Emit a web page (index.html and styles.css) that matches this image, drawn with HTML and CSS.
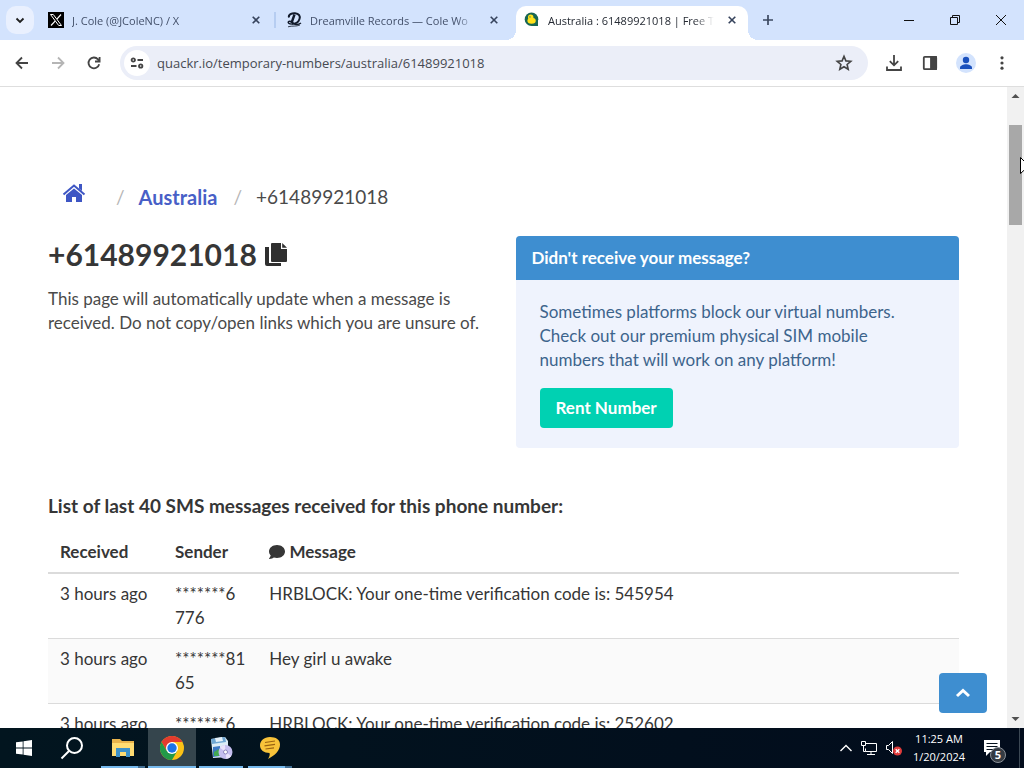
FILE: index.html
```html
<!DOCTYPE html>
<html lang="en">

<head>
    <meta charset="UTF-8">
    <meta name="viewport" content="width=device-width, initial-scale=1.0">
    <title>Australia : 61489921018 | Free Temporary Numbers</title>
    <link rel="stylesheet" href="styles.css">
</head>

<body>
    <!-- Browser tabs -->
    <header class="tab-strip">
        <button class="tab-search" aria-label="Search tabs">
            <svg width="10" height="10" viewBox="0 0 10 10"><path d="M1.5 3.5 5 7l3.5-3.5" fill="none" stroke="#1f1f1f" stroke-width="1.8"/></svg>
        </button>
        <div class="tab">
            <svg class="favicon" width="16" height="16" viewBox="0 0 16 16">
                <rect width="16" height="16" fill="#000"/>
                <path d="M2.500 2.500h2.800l8.200 11h-2.800z" fill="none" stroke="#fff"/>
                <path d="M13 2.500 8.900 7.100M7.100 9.100 3 13.500" stroke="#fff" stroke-width="1.200"/>
            </svg>
            <span class="tab-title">J. Cole (@JColeNC) / X</span>
            <button class="tab-close" aria-label="Close tab"><svg width="8" height="8" viewBox="0 0 8 8"><path d="M.7.7l6.600 6.600M7.300.7.7 7.300"/></svg></button>
        </div>
        <span class="tab-divider"></span>
        <div class="tab">
            <svg class="favicon" width="16" height="16" viewBox="0 0 16 16" fill="none" stroke="#111a2b">
                <path d="M8.500 2.500 5.500 11" stroke-width="2.400"/>
                <path d="M3 5.500C2 2.500 6 1 9 1.200c4 .2 5.500 2.800 4.500 5.800-1 3.200-4.500 5-8 5" stroke-width="2"/>
                <path d="M5.500 12c-2 0-4-1-3-2.300s3.500.2 5 1.500 4.500 2 7.500-.2" stroke-width="1.500"/>
                <path d="M2 14.800c4.500-1.300 8 0 12-1.800" stroke-width=".8"/>
            </svg>
            <span class="tab-title">Dreamville Records — Cole Wo</span>
            <button class="tab-close" aria-label="Close tab"><svg width="8" height="8" viewBox="0 0 8 8"><path d="M.7.7l6.600 6.600M7.300.7.7 7.300"/></svg></button>
        </div>
        <div class="tab active">
            <svg class="favicon" width="16" height="16" viewBox="0 0 16 16">
                <circle cx="7.500" cy="7.300" r="6.800" fill="#176653"/>
                <path d="M8 9h6v5H8z" fill="#176653"/>
                <circle cx="6.700" cy="5.200" r="2.700" fill="#ffe11a"/>
                <ellipse cx="7.600" cy="8.800" rx="4.200" ry="3" fill="#ffe11a"/>
                <circle cx="6" cy="4.900" r=".6" fill="#176653"/>
            </svg>
            <span class="tab-title">Australia : 61489921018 | Free T</span>
            <button class="tab-close" aria-label="Close tab"><svg width="8" height="8" viewBox="0 0 8 8"><path d="M.7.7l6.600 6.600M7.300.7.7 7.300"/></svg></button>
        </div>
        <button class="new-tab" aria-label="New tab">
            <svg width="12" height="12" viewBox="0 0 12 12"><path d="M6 1v10M1 6h10" stroke="#3c4960" stroke-width="1.700"/></svg>
        </button>
        <div class="window-controls">
            <button aria-label="Minimize"><svg width="10" height="10" viewBox="0 0 10 10"><path d="M0 5.500h10"/></svg></button>
            <button aria-label="Restore"><svg width="10" height="10" viewBox="0 0 10 10"><path d="M.5 2.500h7v7h-7zM2.500 2.500v-2h7v7h-2"/></svg></button>
            <button aria-label="Close"><svg width="10" height="10" viewBox="0 0 10 10"><path d="M0 0l10 10M10 0 0 10"/></svg></button>
        </div>
    </header>

    <!-- Address bar -->
    <div class="toolbar">
        <div class="nav-buttons">
            <button aria-label="Back"><svg width="16" height="16" viewBox="0 0 16 16"><path d="M14 8H3M8 2.500 2.500 8 8 13.500"/></svg></button>
            <button aria-label="Forward" disabled><svg width="16" height="16" viewBox="0 0 16 16"><path d="M2 8h11M8 2.500 13.500 8 8 13.500"/></svg></button>
            <button aria-label="Reload"><svg width="16" height="16" viewBox="0 0 16 16"><path d="M13.200 9.200A5.400 5.400 0 1 1 12 4.300l1.500 1.700M13.600 2v4.500H9"/></svg></button>
        </div>
        <div class="omnibox">
            <button class="site-info" aria-label="Site information">
                <svg width="14" height="14" viewBox="0 0 14 14"><circle cx="3.300" cy="4" r="1.700"/><path d="M7.500 4H13M1 10h5.500"/><circle cx="10.700" cy="10" r="1.700"/></svg>
            </button>
            <input class="url" type="text" aria-label="Address" value="quackr.io/temporary-numbers/australia/61489921018">
            <button class="bookmark" aria-label="Bookmark this tab">
                <svg width="18" height="18" viewBox="0 0 18 18"><path d="M9 2.300l1.900 4.600 4.900.4-3.700 3.200 1.100 4.800L9 12.700l-4.200 2.600 1.100-4.800-3.700-3.200 4.900-.4z"/></svg>
            </button>
        </div>
        <div class="toolbar-actions">
            <button aria-label="Downloads"><svg width="18" height="18" viewBox="0 0 18 18"><path d="M9 1v10M4.800 7.200 9 11.300l4.200-4.100M2 12.500V16h14v-3.500"/></svg></button>
            <button aria-label="Side panel"><svg width="16" height="16" viewBox="0 0 16 16"><rect x="1.800" y="1.800" width="12.400" height="12.400" rx="1"/><path d="M9 2h5v12H9z" fill="#444"/></svg></button>
            <button class="profile" aria-label="Profile"><svg width="20" height="20" viewBox="0 0 20 20"><circle cx="10" cy="10" r="10" fill="#d3e3fd"/><circle cx="10" cy="7" r="3.200" fill="#1a50bd"/><path d="M4 16v-1.500c0-2 3.500-3.300 6-3.300s6 1.300 6 3.300V16z" fill="#1a50bd"/></svg></button>
            <button aria-label="Menu"><svg width="16" height="16" viewBox="0 0 16 16"><g fill="#444" stroke="none"><circle cx="8" cy="2.800" r="1.600"/><circle cx="8" cy="8" r="1.600"/><circle cx="8" cy="13.200" r="1.600"/></g></svg></button>
        </div>
    </div>

    <!-- Web page -->
    <div class="viewport">
        <main class="page">
            <nav class="breadcrumb" aria-label="Breadcrumb">
                <ul>
                    <li><a class="home" href="#" aria-label="Home">
                        <svg width="24" height="20" viewBox="0 0 24 20"><path d="M12 5.500 20 12v7h-6v-5h-4v5H4v-7z" fill="#3e56c4"/><path d="M1.500 11.500 12 2.500l10.500 9" fill="none" stroke="#3e56c4" stroke-width="2"/><path d="M17 1h3v7l-3-2.500z" fill="#3e56c4"/></svg>
                    </a></li>
                    <li><a href="#">Australia</a></li>
                    <li>+61489921018</li>
                </ul>
            </nav>

            <div class="columns">
                <section class="number-info">
                    <h1>+61489921018
                        <button class="copy" aria-label="Copy number">
                            <svg width="22" height="26" viewBox="0 0 22 26"><path d="M0 6h4v16h12v3H2a2 2 0 0 1-2-2z" fill="#2f2f2f"/><path d="M6 3a1 1 0 0 1 1-1h9v6h6v12a1 1 0 0 1-1 1H7a1 1 0 0 1-1-1z" fill="#2f2f2f"/><path d="M17.200 2 22 6.800h-4.800z" fill="#2f2f2f"/></svg>
                        </button>
                    </h1>
                    <p>This page will automatically update when a message is received. Do not copy/open links which you are unsure of.</p>
                </section>
                <article class="message">
                    <div class="message-header">Didn't receive your message?</div>
                    <div class="message-body">
                        <p>Sometimes platforms block our virtual numbers. Check out our premium physical SIM mobile numbers that will work on any platform!</p>
                        <a class="rent-button" href="#">Rent Number</a>
                    </div>
                </article>
            </div>

            <h2>List of last 40 SMS messages received for this phone number:</h2>
            <table class="messages">
                <thead>
                    <tr>
                        <th class="received">Received</th>
                        <th class="sender">Sender</th>
                        <th><svg width="16" height="16" viewBox="0 0 16 16"><path d="M8 1C3.500 1 0 3.900 0 7.500c0 1.500.7 2.900 1.700 4C1.300 13 .2 14.200.1 14.300c-.2.300 0 .7.300.7 2 0 3.600-.9 4.400-1.500 1 .3 2.100.5 3.200.5 4.500 0 8-2.900 8-6.500S12.500 1 8 1z" fill="#363636"/></svg> Message</th>
                    </tr>
                </thead>
                <tbody>
                    <tr>
                        <td>3 hours ago</td>
                        <td>*******6<br>776</td>
                        <td>HRBLOCK: Your one-time verification code is: 545954</td>
                    </tr>
                    <tr>
                        <td>3 hours ago</td>
                        <td>*******81<br>65</td>
                        <td>Hey girl u awake</td>
                    </tr>
                    <tr>
                        <td>3 hours ago</td>
                        <td>*******6<br>776</td>
                        <td>HRBLOCK: Your one-time verification code is: 252602</td>
                    </tr>
                </tbody>
            </table>
        </main>

        <div class="scrollbar">
            <svg width="17" height="17" viewBox="0 0 17 17"><path d="M4.500 11 8.500 7l4 4z" fill="#505050"/></svg>
            <div class="scroll-track"><div class="scroll-thumb"></div></div>
            <svg width="17" height="17" viewBox="0 0 17 17"><path d="M4.500 6 8.500 10l4-4z" fill="#505050"/></svg>
        </div>

        <button class="back-to-top" aria-label="Back to top">
            <svg width="16" height="16" viewBox="0 0 16 16"><path d="M2 11l6-5.500 6 5.500" fill="none" stroke="#fff" stroke-width="3"/></svg>
        </button>
        <svg class="cursor" width="4" height="18" viewBox="0 0 4 18"><path d="M.5.5v16L4 13.300V4z" fill="#fff"/><path d="M4 4 .5.5v16L4 13.300" fill="none" stroke="#000"/></svg>
    </div>

    <!-- Taskbar -->
    <footer class="taskbar">
        <button class="task" aria-label="Start">
            <svg width="16" height="16" viewBox="0 0 16 16"><path d="M0 2.300 6.700 1.400v6.200H0zM7.500 1.300 16 0v7.600H7.500zM0 8.400h6.700v6.200L0 13.700zM7.500 8.400H16V16l-8.500-1.300z" fill="#fff"/></svg>
        </button>
        <button class="task" aria-label="Search">
            <svg width="24" height="24" viewBox="0 0 24 24" fill="none" stroke="#fff" stroke-width="2"><circle cx="14.500" cy="9.500" r="7.500"/><path d="M9 15l-7.500 7.500"/></svg>
        </button>
        <div class="running">
            <button class="task open stacked" aria-label="File Explorer">
                <svg width="22" height="20" viewBox="0 0 22 20"><path d="M0 1h8l2 2h12v15H0z" fill="#e9b44c"/><path d="M0 5h22v13H0z" fill="#ffdc72"/><path d="M4 10h14v9h-4v-5H8v5H4z" fill="#3d91c9"/></svg>
            </button>
            <button class="task open current" aria-label="Google Chrome">
                <svg width="24" height="24" viewBox="0 0 24 24">
                    <circle cx="12" cy="12" r="12" fill="#fbc116"/>
                    <path d="M1.600 6A12 12 0 0 1 22.400 6H12l-5.200 9z" fill="#e33b2e"/>
                    <path d="M1.600 6A12 12 0 0 0 12 24l5.200-9H6.800z" fill="#229a48"/>
                    <circle cx="12" cy="12" r="6" fill="#fff"/><circle cx="12" cy="12" r="4.700" fill="#1a73e8"/>
                </svg>
            </button>
            <button class="task open" aria-label="Programs">
                <svg width="24" height="24" viewBox="0 0 24 24">
                    <path d="M2 3l14-2 3 4v16L4 22z" fill="#dcecf6"/><path d="M2 3l14-2 1 5L3 8z" fill="#6fa7d3"/><path d="M6 2l7-1 1 4-7 1z" fill="#e7f3fb"/>
                    <path d="M4 11l7-1v10l-7 1z" fill="#3c79c4"/><path d="M5 16l5-3v7H5z" fill="#43a852"/>
                    <circle cx="16.500" cy="16" r="7" fill="#c5bff0"/><path d="M16.500 16 11 11.700a7 7 0 0 1 5-2.700zM16.500 16l5.800 4a7 7 0 0 1-5 3z" fill="#e9e3fb"/><circle cx="16.500" cy="16" r="2" fill="#fff" stroke="#8d87bd"/>
                </svg>
            </button>
            <button class="task open stacked" aria-label="Messenger">
                <svg width="22" height="24" viewBox="0 0 22 24"><path d="M11 1c6 0 10 2.700 10 7.500 0 6-5 11-12 14.500 1.500-2.500 2-4 1.500-6C5 17 1 14 1 9.500S5 1 11 1z" fill="#f8c33a"/><path d="M6 6.500l10-1.500M5.500 9.800l10.500-1.500M6.500 13l8.500-1.200" stroke="#9a6312" stroke-width="1.200"/></svg>
            </button>
        </div>
        <div class="tray">
            <svg width="14" height="16" viewBox="0 0 14 16"><path d="M1.500 11 7 5.500 12.500 11" stroke-width="1.400"/></svg>
            <svg width="16" height="16" viewBox="0 0 16 16"><path d="M4.500 3.500h11v8h-11v-3M10 11.500v3M6 14.500h8M.5 1.500h4v4h-4zM2.500 5.500v6h2"/></svg>
            <svg width="18" height="16" viewBox="0 0 18 16"><path d="M1.500 5.500h2l4-4v12l-4-4h-2z"/><circle cx="12.500" cy="11" r="4.500" fill="#e03b3b" stroke="none"/><path d="M10.700 9.200l3.600 3.600M14.300 9.200l-3.600 3.600" stroke-width="1.300"/></svg>
            <time class="clock" datetime="2024-01-20T11:25">11:25 AM<br>1/20/2024</time>
            <button class="notifications" aria-label="5 notifications">
                <svg width="18" height="18" viewBox="0 0 18 18"><path d="M1 1h16v12H7l-4 4v-4H1z" fill="#fff" stroke="none"/><path d="M3.500 4.500h11M3.500 7.500h11M3.500 10.500h8" stroke="#06121f"/></svg>
                <span class="badge">5</span>
            </button>
        </div>
    </footer>
</body>

</html>
```
FILE: styles.css
```css
* {
    margin: 0;
    padding: 0;
    box-sizing: border-box;
}

body {
    display: flex;
    flex-direction: column;
    height: 100vh;
    overflow: hidden;
    font-family: "Open Sans", sans-serif;
    background-color: #fff;
}

button {
    display: flex;
    align-items: center;
    justify-content: center;
    flex-shrink: 0;
    border: none;
    background: none;
    font-family: inherit;
}

svg {
    flex-shrink: 0;
}

/* Tab strip */
.tab-strip {
    display: flex;
    align-items: flex-end;
    height: 40px;
    flex-shrink: 0;
    padding-left: 6px;
    background-color: #d3e3fd;
}

.tab-search {
    width: 28px;
    height: 28px;
    margin-bottom: 6px;
    border-radius: 10px;
    background-color: #e9f0fe;
}

.tab {
    display: flex;
    align-items: center;
    width: 232px;
    height: 34px;
    padding: 0 6px 6px 8px;
    font-size: 11px;
    color: #43506a;
}

.tab-search + .tab {
    margin-left: 6px;
}

.tab-title {
    flex: 1;
    margin-left: 8px;
    overflow: hidden;
    white-space: nowrap;
    mask-image: linear-gradient(to right, #000 88%, transparent);
}

.tab-close {
    width: 20px;
    height: 20px;
    margin-left: 8px;
    stroke: #36435c;
    stroke-width: 1.6px;
}

.tab-divider {
    width: 2px;
    height: 16px;
    margin: 0 2px 12px;
    background-color: #b6cdf1;
}

.tab.active {
    position: relative;
    margin-left: 6px;
    color: #252a33;
    background-color: #fff;
    border-radius: 10px 10px 0 0;
}

/* Curved feet of the active tab */
.tab.active::before,
.tab.active::after {
    content: "";
    position: absolute;
    bottom: 0;
    width: 10px;
    height: 10px;
}

.tab.active::before {
    left: -10px;
    background: radial-gradient(circle at 0 0, transparent 10px, #fff 10px);
}

.tab.active::after {
    right: -10px;
    background: radial-gradient(circle at 100% 0, transparent 10px, #fff 10px);
}

.new-tab {
    width: 28px;
    height: 28px;
    margin: 0 0 6px 6px;
}

.window-controls {
    display: flex;
    margin-left: auto;
}

.window-controls button {
    width: 46px;
    height: 40px;
    fill: none;
    stroke: #111;
}

/* Toolbar */
.toolbar {
    display: flex;
    align-items: center;
    height: 47px;
    flex-shrink: 0;
    padding: 0 8px;
    border-bottom: 1px solid #dedede;
    fill: none;
    stroke: #444;
    stroke-width: 1.8px;
}

.nav-buttons {
    display: flex;
    gap: 8px;
}

.nav-buttons button {
    width: 28px;
    height: 28px;
}

.nav-buttons button:disabled {
    stroke: #b5b5b5;
}

.omnibox {
    display: flex;
    align-items: center;
    flex: 1;
    height: 34px;
    margin-left: 12px;
    padding: 0 10px 0 4px;
    border-radius: 17px;
    background-color: #ebeef8;
}

.site-info {
    width: 26px;
    height: 26px;
    border-radius: 50%;
    background-color: #fff;
}

.url {
    flex: 1;
    min-width: 0;
    margin-left: 7px;
    border: none;
    outline: none;
    background: none;
    font-family: inherit;
    font-size: 13px;
    color: #474a52;
}

.bookmark {
    width: 28px;
    height: 28px;
    stroke-width: 1.6px;
}

.toolbar-actions {
    display: flex;
    gap: 8px;
    margin-left: 12px;
}

.toolbar-actions button {
    width: 28px;
    height: 28px;
}

.toolbar-actions .profile {
    stroke: none;
}

/* Page area */
.viewport {
    position: relative;
    display: flex;
    flex: 1;
    min-height: 0;
    overflow: hidden;
}

.page {
    flex: 1;
    min-width: 0;
    padding: 94px 48px 0;
    font-family: Lato, sans-serif;
    font-size: 17px;
    line-height: 24px;
    color: #4a4a4a;
}

.breadcrumb ul {
    display: flex;
    list-style: none;
    font-size: 19px;
    line-height: 32px;
}

.breadcrumb li {
    display: flex;
}

.breadcrumb li + li::before {
    content: "/";
    margin: 0 14px 0 16px;
    color: #b5b5b5;
}

.breadcrumb a {
    font-size: 20px;
    font-weight: bold;
    color: #485fc7;
    text-decoration: none;
}

.breadcrumb .home {
    display: flex;
    align-items: flex-start;
    padding: 2px 14px 0;
}

.columns {
    display: grid;
    grid-template-columns: 1fr 1fr;
    gap: 24px;
    margin-top: 23px;
}

h1 {
    display: flex;
    align-items: center;
    gap: 8px;
    margin-bottom: 15px;
    font-size: 30px;
    line-height: 36px;
    color: #363636;
}

.message {
    border-radius: 4px;
    background-color: #eff3fd;
    overflow: hidden;
}

.message-header {
    padding: 10px 16px;
    font-weight: bold;
    color: #fff;
    background-color: #3e8ed0;
}

.message-body {
    padding: 20px 24px;
    color: #3d648c;
}

.rent-button {
    display: inline-block;
    margin-top: 16px;
    padding: 8px 16px;
    border-radius: 4px;
    font-weight: bold;
    color: #fff;
    background-color: #00d1b2;
    text-decoration: none;
    vertical-align: top;
}

h2 {
    margin: 46px 0 14px;
    font-size: 19px;
    line-height: 24px;
    color: #363636;
}

.messages {
    width: 100%;
    border-collapse: separate;
    border-spacing: 0;
    color: #363636;
}

.messages th,
.messages td {
    padding: 8px 12px;
    border-bottom: 1px solid #dbdbdb;
    text-align: left;
    vertical-align: top;
}

.messages th {
    border-bottom-width: 2px;
}

.messages th svg {
    vertical-align: -2px;
}

.messages .received {
    width: 115px;
}

.messages .sender {
    width: 94px;
}

.messages tbody tr:nth-child(even) {
    background-color: #fafafa;
}

/* Scroll bar */
.scrollbar {
    display: flex;
    flex-direction: column;
    width: 17px;
    background-color: #f1f1f1;
}

.scroll-track {
    flex: 1;
    padding: 21px 2px 0;
}

.scroll-thumb {
    height: 100px;
    background-color: #a8a8a8;
}

.back-to-top {
    position: absolute;
    right: 37px;
    bottom: 15px;
    width: 48px;
    height: 40px;
    border-radius: 4px;
    background-color: #3e8ed0;
}

.cursor {
    position: absolute;
    top: 70px;
    right: 0;
}

/* Taskbar */
.taskbar {
    display: flex;
    height: 40px;
    flex-shrink: 0;
    background: linear-gradient(to right, #02151f, #020c1c);
}

.running {
    display: flex;
    gap: 1px;
    margin-left: 3px;
}

.task {
    width: 48px;
    height: 40px;
    border-bottom: 2px solid transparent;
    border-top: 2px solid transparent;
}

.task.open {
    border-image: linear-gradient(to right, transparent 4px, #76b9ed 4px 44px, transparent 44px) 2;
    border-top: none;
    padding-top: 2px;
}

.task.stacked {
    border-image: linear-gradient(to right, transparent 4px, #76b9ed 4px 38px, #426f94 38px 44px, transparent 44px) 2;
}

.task.current {
    background-color: #35454d;
    border-image: none;
    border-bottom-color: #76b9ed;
}

.tray {
    display: flex;
    align-items: center;
    gap: 8px;
    margin-left: auto;
    padding-right: 4px;
    border-right: 1px solid #3c4854;
    margin-right: 4px;
    fill: none;
    stroke: #fff;
    color: #fff;
}

.clock {
    width: 56px;
    font-size: 11px;
    line-height: 18px;
    text-align: center;
    white-space: nowrap;
    stroke: none;
}

.notifications {
    position: relative;
    width: 40px;
    height: 40px;
    padding-right: 6px;
}

.badge {
    position: absolute;
    right: 9px;
    bottom: 5px;
    width: 16px;
    height: 16px;
    border: 1px solid #8b9199;
    border-radius: 50%;
    font-size: 11px;
    font-weight: bold;
    line-height: 14px;
    color: #fff;
    background-color: #353b43;
    stroke: none;
}
```
